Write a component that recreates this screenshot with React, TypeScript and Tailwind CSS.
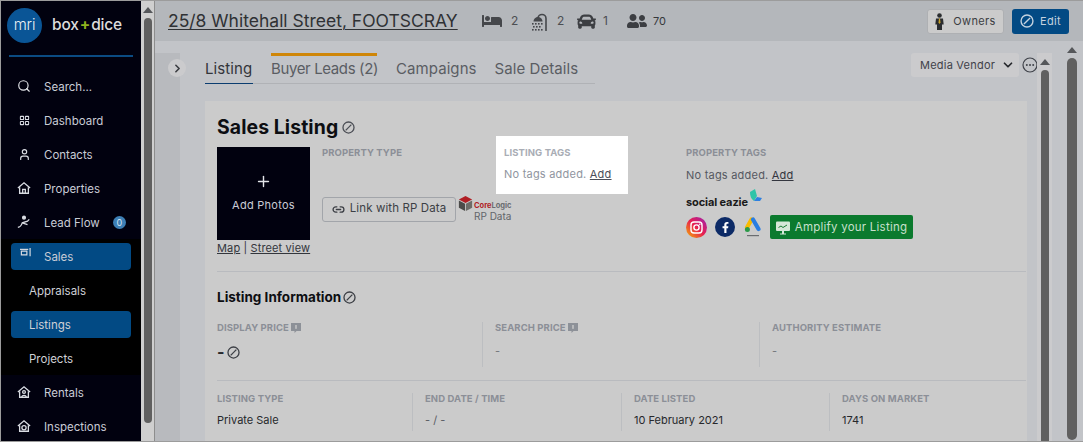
import React from "react";
import { Search, User, Plus, Link2, ChevronDown, ChevronRight, LayoutGrid } from "lucide-react";
import { FaBed, FaCar, FaUserFriends, FaFacebookF } from "react-icons/fa";

const Slash = ({ size, color, strokeWidth = 1.6 }: { size: number; color: string; strokeWidth?: number }) => (
  <svg width={size} height={size} viewBox="0 0 16 16" fill="none" stroke={color} strokeWidth={strokeWidth} className="shrink-0">
    <circle cx="8" cy="8" r="6.800" />
    <path d="M11.500 4.500 4.500 11.500" />
  </svg>
);

const HomeIcon = ({ inner }: { inner?: "door" | "person" | "ring" }) => (
  <svg width="14" height="14" viewBox="0 0 16 16" fill="none" stroke="#d9dce2" strokeWidth="1.500">
    <path d="M1 8 8 2l7 6" />
    <path d="M3 7v7h10V7" />
    {inner === "door" && <path d="M6.500 14V9.500h3V14" />}
    {inner === "person" && <><circle cx="8" cy="8" r="1.600" /><path d="M5.500 14c0-3 5-3 5 0" /></>}
    {inner === "ring" && <circle cx="8" cy="10" r="2.400" />}
  </svg>
);

const LeadIcon = () => (
  <svg width="14" height="14" viewBox="0 0 16 16" fill="none" stroke="#d9dce2" strokeWidth="1.500">
    <circle cx="8" cy="3" r="1.600" fill="#d9dce2" />
    <path d="M1 14c3 0 4-2 5-5l6-2 2-2M6 9l6 2" />
  </svg>
);

const SalesIcon = () => (
  <svg width="11" height="11" viewBox="0 0 12 12" fill="none" stroke="#d9dce2" strokeWidth="1.300">
    <path d="M0 1.500h9" />
    <path d="M1.500 3.500h6v4h-6z" />
    <path d="M11 0v9" />
  </svg>
);

const ShowerIcon = () => (
  <svg width="17" height="19" viewBox="0 0 17 19" fill="#45474b">
    <path d="M15 19V6.500a4 4 0 0 0-8 0" fill="none" stroke="#45474b" strokeWidth="1.600" />
    <path d="M7 5c-3 0-4.500 2.500-4.500 4.500h9C11.500 7.500 10 5 7 5z" />
    <g>
      <rect x="1" y="11" width="1.600" height="1.600" /><rect x="4" y="11" width="1.600" height="1.600" /><rect x="7" y="11" width="1.600" height="1.600" /><rect x="10" y="11" width="1.600" height="1.600" />
      <rect x="2" y="14" width="1.600" height="1.600" /><rect x="5" y="14" width="1.600" height="1.600" /><rect x="8" y="14" width="1.600" height="1.600" />
      <rect x="1" y="17" width="1.600" height="1.600" /><rect x="4" y="17" width="1.600" height="1.600" /><rect x="7" y="17" width="1.600" height="1.600" /><rect x="10" y="17" width="1.600" height="1.600" />
    </g>
  </svg>
);

const OwnerIcon = () => (
  <svg width="9" height="17" viewBox="0 0 9 17" fill="#2b2d30">
    <circle cx="4.500" cy="2.500" r="2.300" />
    <path d="M1 5.500h7l.7 6H7V17H2v-5.500H.3z" />
    <path d="M4 5.500h1l.5 4-1 1.500-1-1.500z" fill="#c9a227" />
  </svg>
);

const Info = () => (
  <svg width="10" height="10" viewBox="0 0 10 10" className="shrink-0">
    <path d="M0 0h10v8H5.500L3.500 10V8H0z" fill="#8d9198" />
    <rect x="4.300" y="2" width="1.400" height="3.800" fill="#cbcbcb" />
  </svg>
);

const Instagram = () => (
  <svg width="21" height="21" viewBox="0 0 21 21">
    <defs>
      <linearGradient id="ig" x1="0" y1="1" x2="1" y2="0">
        <stop offset="0" stopColor="#f5b400" />
        <stop offset="0.5" stopColor="#e8204f" />
        <stop offset="1" stopColor="#9a1fb5" />
      </linearGradient>
    </defs>
    <circle cx="10.500" cy="10.500" r="10.500" fill="url(#ig)" />
    <rect x="5" y="5" width="11" height="11" rx="3" fill="none" stroke="#fff" strokeWidth="1.400" />
    <circle cx="10.500" cy="10.500" r="2.600" fill="none" stroke="#fff" strokeWidth="1.400" />
    <circle cx="13.800" cy="7.200" r="0.800" fill="#fff" />
  </svg>
);

const GoogleAds = () => (
  <svg width="18" height="21" viewBox="0 0 18 21">
    <path d="M7.500 2.500 3 10.500" stroke="#f9bb00" strokeWidth="4.200" strokeLinecap="round" />
    <path d="M9 2.500 14.500 12" stroke="#2a7de1" strokeWidth="4.200" strokeLinecap="round" />
    <circle cx="3.400" cy="12.500" r="2.500" fill="#2a9a48" />
    <rect x="3" y="18" width="12" height="1.200" fill="#6a6d71" />
  </svg>
);

const Amplify = () => (
  <svg width="14" height="14" viewBox="0 0 14 14">
    <rect x="0" y="0.500" width="14" height="9.500" rx="1" fill="#d5e8d8" />
    <path d="M2.500 6.500 5 5l2 1.500 4-2.500" fill="none" stroke="#1a7c34" strokeWidth="1" />
    <path d="M6 10h2v2.500h2v1H4v-1h2z" fill="#d5e8d8" />
  </svg>
);

const CoreLogicMark = () => (
  <svg width="15" height="15" viewBox="0 0 15 17">
    <path d="M7.500 0 15 4 7.500 8 0 4z" fill="#b01e24" />
    <path d="M0 5l7 3.700V17l-7-3.800z" fill="#4b4b49" />
    <path d="M15 5 8 8.700V17l7-3.800z" fill="#6d6c68" />
  </svg>
);

const Label = ({ children, className = "" }: { children: React.ReactNode; className?: string }) => (
  <div className={`text-[9.5px] leading-[12px] font-bold text-[#8b8f97] tracking-[0.01em] whitespace-nowrap ${className}`}>{children}</div>
);

const NavRow = ({ icon, label, badge }: { icon: React.ReactNode; label: string; badge?: string }) => (
  <div className="h-[34px] shrink-0 flex items-center text-[11.5px] text-[#c9ccd6]">
    <div className="w-[43px] pl-[16px] shrink-0 flex items-center">
      <div className="w-[14px] flex justify-center">{icon}</div>
    </div>
    <span className="pt-[3px]">{label}</span>
    {badge && (
      <span className="ml-[13px] w-[13px] h-[13px] rounded-full bg-[#3d7fb5] text-[9px] leading-[13px] text-center text-[#d5e4f0]">{badge}</span>
    )}
  </div>
);

const SubRow = ({ label, active }: { label: string; active?: boolean }) => (
  <div className="h-[34px] flex items-center px-[10px] text-[11.5px] text-[#cfd1d6]">
    <div className={`w-full h-[27px] rounded-[4px] flex items-center pl-[18px] pt-[3px] ${active ? "bg-[#024a84]" : ""}`}>{label}</div>
  </div>
);

const Arrow = () => (
  <div className="w-0 h-0 mx-auto border-l-[5px] border-r-[5px] border-b-[6px] border-l-transparent border-r-transparent border-b-[#55575a]" />
);

export default function App() {
  return (
    <div className="w-[1083px] h-[442px] overflow-hidden flex bg-[#c2c4c8] font-['Inter','Liberation_Sans',sans-serif] border-t border-b border-l border-[#9c9c9c]">
      {/* sidebar */}
      <aside className="w-[140px] shrink-0 bg-[#01010f] flex flex-col text-white overflow-hidden">
        <div className="h-[56px] shrink-0 mx-[8px] border-b-2 border-[#0b4b82] flex items-center">
          <div className="w-[35px] h-[35px] rounded-full bg-[#0a5596] flex items-center justify-center shrink-0 -ml-[2px] -mt-[6px]">
            <span className="text-[15px] leading-none font-light text-[#e8f0f4] tracking-[-0.01em] -mt-[2px]">mri</span>
          </div>
          <div className="ml-[10px] -mt-[6px] text-[15.5px] font-medium text-[#dcdcdc] tracking-[-0.01em] whitespace-nowrap">
            box<span className="text-[#8fb31e] font-bold mx-[1px]">+</span>dice
          </div>
        </div>
        <div className="mt-[12px] shrink-0">
          <NavRow icon={<Search size={18} color="#e4e6ea" strokeWidth={2} />} label="Search..." />
          <NavRow icon={<LayoutGrid size={11} color="#d9dce2" strokeWidth={2.2} />} label="Dashboard" />
          <NavRow icon={<User size={13} color="#d9dce2" strokeWidth={2.2} />} label="Contacts" />
          <NavRow icon={<HomeIcon inner="door" />} label="Properties" />
          <NavRow icon={<LeadIcon />} label="Lead Flow" badge="0" />
        </div>
        <div className="bg-black shrink-0">
          <div className="h-[34px] flex items-center px-[10px] text-[11.5px] text-[#c9ccd6]">
            <div className="w-full h-[27px] rounded-[4px] bg-[#024a84] flex items-center">
              <div className="w-[33px] pl-[9px] -mt-[6px]"><SalesIcon /></div>
              <span className="pt-[3px]">Sales</span>
            </div>
          </div>
          <SubRow label="Appraisals" />
          <SubRow label="Listings" active />
          <SubRow label="Projects" />
        </div>
        <NavRow icon={<HomeIcon inner="person" />} label="Rentals" />
        <NavRow icon={<HomeIcon inner="ring" />} label="Inspections" />
      </aside>

      {/* sidebar scrollbar */}
      <div className="w-[14px] shrink-0 bg-[#cfcfcf] border-r border-[#8d8d8d]">
        <div className="pt-[6px]"><Arrow /></div>
        <div className="w-[8px] h-[405px] mx-auto mt-[5px] rounded-full bg-[#606060]" />
      </div>

      {/* main */}
      <div className="flex-1 min-w-0 flex flex-col">
        <header className="h-[40px] shrink-0 bg-[#b4b7bb] flex items-center pl-[13px] pr-[14px]">
          <h1 className="text-[17.5px] text-[#2f3134] underline underline-offset-2 decoration-1 whitespace-nowrap w-[291px]">25/8 Whitehall Street, FOOTSCRAY</h1>
          <div className="ml-[23px] flex items-center text-[12px] text-[#4c4e52]">
            <FaBed size={20} color="#45474b" />
            <span className="ml-[9px] w-[20px]">2</span>
            <ShowerIcon />
            <span className="ml-[9px] w-[20px]">2</span>
            <FaCar size={19} color="#3c3e42" />
            <span className="ml-[7px] w-[24px]">1</span>
            <FaUserFriends size={20} color="#3c3e42" />
            <span className="ml-[6px] text-[#36383b] text-[11px]">70</span>
          </div>
          <div className="ml-auto flex items-center gap-[8px]">
            <button className="w-[77px] h-[25px] rounded-[3px] bg-[#cbcbcb] border border-[#aeb0b3] flex items-center justify-center gap-[9px] text-[11px] tracking-[0.03em] text-[#3b3d42]">
              <OwnerIcon />Owners
            </button>
            <button className="w-[57px] h-[25px] rounded-[3px] bg-[#024a84] flex items-center justify-center gap-[6px] text-[11px] tracking-[0.03em] text-[#c4d2df]">
              <Slash size={14} color="#c4d2df" />Edit
            </button>
          </div>
        </header>

        <div className="flex-1 min-h-0 flex">
          {/* collapsible strip */}
          <div className="w-[25px] shrink-0 mt-[12px] bg-[#b8babe] relative">
            <div className="absolute left-[13px] top-[6px] w-[18px] h-[18px] rounded-full bg-[#cbcbcd] flex items-center justify-center">
              <ChevronRight size={13} color="#3c3e42" strokeWidth={3} />
            </div>
          </div>

          {/* content */}
          <div className="w-[847px] shrink-0 flex flex-col pl-[25px]">
            <div className="h-[60px] shrink-0 flex items-start -mr-[11px]">
              <div className="mt-[12px] w-[390px] h-[31px] border-b border-[#b0b2b6] flex text-[15px] text-[#5a5d63] tracking-[0.005em]">
                <div className="w-[48px] h-[31px] border-b border-[#0b3d70] text-[#33353a] pt-[5px] whitespace-nowrap">Listing</div>
                <div className="ml-[18px] w-[106px] border-t-[3px] border-[#cf8608] pt-[2px] whitespace-nowrap tracking-[-0.025em]">Buyer Leads (2)</div>
                <div className="ml-[19px] pt-[5px]">Campaigns</div>
                <div className="ml-[18px] pt-[5px] whitespace-nowrap">Sale Details</div>
              </div>
              <div className="ml-auto mt-[12px] w-[108px] h-[24px] rounded-[3px] bg-[#cbcbcd] flex items-center pl-[9px] gap-[6px] text-[11px] tracking-[0.02em] text-[#3f4249] whitespace-nowrap">
                Media Vendor<ChevronDown size={14} color="#26282c" strokeWidth={3} />
              </div>
              <svg width="16" height="16" viewBox="0 0 16 16" className="ml-[3px] mt-[16px]">
                <circle cx="8" cy="8" r="7" fill="none" stroke="#3f4249" strokeWidth="1.200" />
                <circle cx="4.800" cy="8" r="1" fill="#3f4249" /><circle cx="8" cy="8" r="1" fill="#3f4249" /><circle cx="11.200" cy="8" r="1" fill="#3f4249" />
              </svg>
            </div>
            <div className="flex-1 min-h-0 bg-[#cbcbcb] pl-[12px] pr-[1px] overflow-hidden">
              <div className="mt-[14px] flex items-center gap-[4px]">
                <h2 className="text-[19.4px] leading-[24px] font-bold text-[#0d0e12] tracking-[0.005em]">Sales Listing</h2>
                <Slash size={13} color="#4b4e55" />
              </div>
              <div className="mt-[8px] flex h-[125px] items-start">
                <div className="w-[93px] shrink-0">
                  <div className="w-[93px] h-[93px] bg-[#01010f] flex flex-col items-center justify-center text-[#c9ccd6]">
                    <Plus size={17} color="#e4e6ea" strokeWidth={2} />
                    <span className="mt-[7px] text-[11px] tracking-[0.025em]">Add Photos</span>
                  </div>
                  <div className="mt-[1px] text-[11px] leading-[14px] text-[#33363c] whitespace-nowrap tracking-[0.012em]">
                    <span className="underline">Map</span> | <span className="underline">Street view</span>
                  </div>
                </div>
                <div className="w-[174px] ml-[12px] shrink-0">
                  <Label>PROPERTY TYPE</Label>
                  <div className="mt-[37px] flex items-center">
                    <button className="w-[134px] h-[25px] shrink-0 rounded-[3px] border border-[#a2a5aa] flex items-center justify-center gap-[5px] text-[11.5px] tracking-[0.01em] text-[#3c3f45]">
                      <Link2 size={13} color="#3c3f45" strokeWidth={2.4} />Link with RP Data
                    </button>
                    <div className="ml-[2px] flex items-start shrink-0">
                      <CoreLogicMark />
                      <div className="ml-[1px] flex flex-col">
                        <span className="text-[7.5px] leading-[8px] font-bold mt-[6px] whitespace-nowrap"><span className="text-[#b01e24]">Core</span><span className="text-[#6a6d71]">Logic</span></span>
                        <span className="text-[10px] leading-[12px] text-[#62656a] whitespace-nowrap">RP Data</span>
                      </div>
                    </div>
                  </div>
                </div>
                <div className="w-[132px] h-[58px] shrink-0 -mt-[11px] bg-white pl-[8px] pt-[11px]">
                  <Label className="text-[#a9adb5]">LISTING TAGS</Label>
                  <div className="mt-[8px] text-[11px] leading-[14px] tracking-[0.02em] text-[#9095a0] whitespace-nowrap">No tags added. <span className="underline text-[#4b4e58]">Add</span></div>
                </div>
                <div className="ml-[58px] flex-1">
                  <Label>PROPERTY TAGS</Label>
                  <div className="mt-[9px] text-[11px] leading-[14px] tracking-[0.02em] text-[#555861] whitespace-nowrap">No tags added. <span className="underline text-[#34363f]">Add</span></div>
                  <div className="mt-[6px] h-[22px] flex items-center">
                    <div className="text-[11px] leading-[13px] font-bold text-[#1a1a1a] whitespace-nowrap tracking-[-0.01em] mt-[6px]">social eazie</div>
                    <svg width="13" height="15" viewBox="0 0 13 15" className="ml-[1px] -mt-[6px]">
                      <path d="M1 3 6 0l2 7-3 5C2 10 1 7 1 3z" fill="#2fc4a8" />
                      <path d="M5 12l3-4 5 1-2 3z" fill="#2f80e0" />
                    </svg>
                  </div>
                  <div className="mt-[5px] flex items-center h-[24px]">
                    <Instagram />
                    <div className="ml-[8px] w-[20px] h-[20px] rounded-full bg-[#0c2a66] flex items-center justify-center"><FaFacebookF size={11} color="#fff" /></div>
                    <div className="ml-[9px]"><GoogleAds /></div>
                    <button className="ml-[8px] w-[143px] h-[24px] rounded-[2px] bg-[#0b7a2e] flex items-center justify-center gap-[5px] pt-[1px] text-[11.5px] tracking-[0.02em] text-[#c8e0cd] whitespace-nowrap">
                      <Amplify />Amplify your Listing
                    </button>
                  </div>
                </div>
              </div>
              <div className="h-px bg-[#b9bbbf] mt-[-1px]" />
              <div className="mt-[17px] flex items-center gap-[2px]">
                <h3 className="text-[13.5px] leading-[16px] font-bold text-[#0d0e12]">Listing Information</h3>
                <Slash size={13} color="#3c3f45" />
              </div>
              <div className="mt-[17px] grid grid-cols-[265px_277px_1fr] h-[45px]">
                <div>
                  <div className="flex items-center gap-[2px]"><Label>DISPLAY PRICE</Label><Info /></div>
                  <div className="mt-[9px] flex items-center gap-[3px] text-[#26282c]">
                    <span className="text-[16px] leading-[18px] font-bold">-</span>
                    <Slash size={13} color="#3c3f45" />
                  </div>
                </div>
                <div className="border-l border-[#bcbec1] pl-[12px]">
                  <div className="flex items-center gap-[2px]"><Label>SEARCH PRICE</Label><Info /></div>
                  <div className="mt-[10px] text-[11px] leading-[14px] text-[#74777d]">-</div>
                </div>
                <div className="border-l border-[#bcbec1] pl-[12px]">
                  <Label>AUTHORITY ESTIMATE</Label>
                  <div className="mt-[10px] text-[11px] leading-[14px] text-[#74777d]">-</div>
                </div>
              </div>
              <div className="h-px bg-[#b9bbbf] mt-[13px]" />
              <div className="mt-[12px] grid grid-cols-[195px_209px_208px_1fr] h-[38px]">
                <div>
                  <Label>LISTING TYPE</Label>
                  <div className="mt-[8px] text-[11px] leading-[14px] text-[#26282c]">Private Sale</div>
                </div>
                <div className="border-l border-[#bcbec1] pl-[12px]">
                  <Label>END DATE / TIME</Label>
                  <div className="mt-[8px] text-[11px] leading-[14px] text-[#5a5d63]">- / -</div>
                </div>
                <div className="border-l border-[#bcbec1] pl-[12px]">
                  <Label>DATE LISTED</Label>
                  <div className="mt-[8px] text-[11px] leading-[14px] text-[#26282c]">10 February 2021</div>
                </div>
                <div className="border-l border-[#bcbec1] pl-[12px]">
                  <Label>DAYS ON MARKET</Label>
                  <div className="mt-[8px] text-[11px] leading-[14px] text-[#26282c]">1741</div>
                </div>
              </div>
            </div>
          </div>

          {/* inner scrollbar */}
          <div className="ml-[10px] w-[15px] shrink-0 mt-[12px] bg-[#cbcbcd] overflow-hidden">
            <div className="pt-[6px]"><Arrow /></div>
            <div className="w-[8px] h-[400px] mx-auto mt-[5px] rounded-full bg-[#606060]" />
          </div>

          {/* outer scrollbar */}
          <div className="ml-[12px] w-[19px] shrink-0 pr-[4px]">
            <div className="pt-[6px]"><Arrow /></div>
            <div className="w-[10px] h-[382px] mx-auto mt-[5px] rounded-full bg-[#606060]" />
          </div>
        </div>
      </div>
    </div>
  );
}
